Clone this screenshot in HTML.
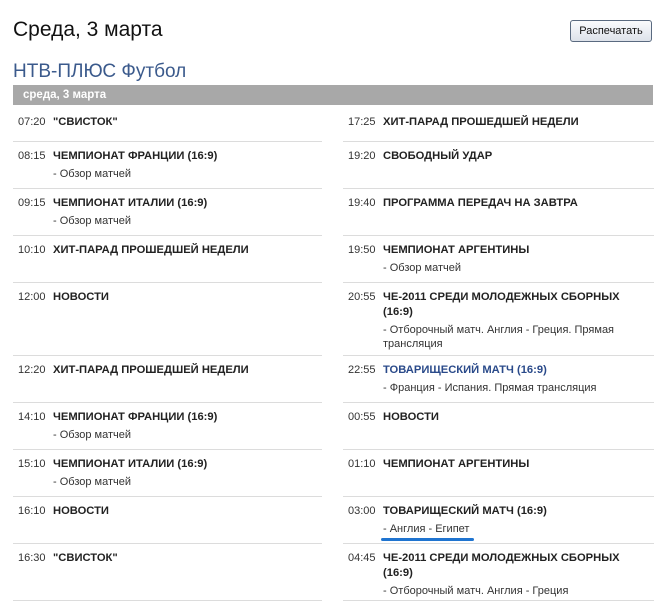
<!DOCTYPE html>
<html><head><meta charset="utf-8"><style>
body{margin:0;width:664px;height:608px;background:#fff;font-family:"Liberation Sans",Tahoma,sans-serif;position:relative;overflow:hidden;color:#333}
.h1{position:absolute;left:13px;top:18px;font-size:21px;color:#111}
.h2{position:absolute;left:13px;top:61px;font-size:19px;color:#3b5a8c}
.btn{position:absolute;left:570px;top:20px;width:80px;height:20px;border:1px solid #5a6a80;border-radius:3px;background:linear-gradient(#fafbfd,#dde2ea);font-size:11px;color:#111;text-align:center;line-height:20px}
.bar{position:absolute;left:13px;top:85px;width:640px;height:20px;background:#a8a8a8;color:#fff;font-weight:bold;font-size:11.5px;line-height:21px}
.bar span{padding-left:10px}
.r{position:absolute;font-size:11px;line-height:15px}
.t{position:absolute;color:#333}
.n{position:absolute;font-weight:bold;color:#222;width:262px;font-size:11.2px}
.d{font-weight:normal;color:#333;margin-top:3px;font-size:11px}
.ln{position:absolute;height:1px;background:#dcdcdc}
a{color:#2a4a8a}
</style></head><body>
<div class="h1">Среда, 3 марта</div>
<div class="btn">Распечатать</div>
<div class="h2">НТВ-ПЛЮС Футбол</div>
<div class="bar"><span>среда, 3 марта</span></div>

<div class="r" style="left:18px;top:115px"><span class="t">07:20</span><div class="n" style="left:35px">"СВИСТОК"</div></div>
<div class="r" style="left:18px;top:149px"><span class="t">08:15</span><div class="n" style="left:35px">ЧЕМПИОНАТ ФРАНЦИИ (16:9)<div class="d">- Обзор матчей</div></div></div>
<div class="r" style="left:18px;top:196px"><span class="t">09:15</span><div class="n" style="left:35px">ЧЕМПИОНАТ ИТАЛИИ (16:9)<div class="d">- Обзор матчей</div></div></div>
<div class="r" style="left:18px;top:243px"><span class="t">10:10</span><div class="n" style="left:35px">ХИТ-ПАРАД ПРОШЕДШЕЙ НЕДЕЛИ</div></div>
<div class="r" style="left:18px;top:290px"><span class="t">12:00</span><div class="n" style="left:35px">НОВОСТИ</div></div>
<div class="r" style="left:18px;top:363px"><span class="t">12:20</span><div class="n" style="left:35px">ХИТ-ПАРАД ПРОШЕДШЕЙ НЕДЕЛИ</div></div>
<div class="r" style="left:18px;top:410px"><span class="t">14:10</span><div class="n" style="left:35px">ЧЕМПИОНАТ ФРАНЦИИ (16:9)<div class="d">- Обзор матчей</div></div></div>
<div class="r" style="left:18px;top:457px"><span class="t">15:10</span><div class="n" style="left:35px">ЧЕМПИОНАТ ИТАЛИИ (16:9)<div class="d">- Обзор матчей</div></div></div>
<div class="r" style="left:18px;top:504px"><span class="t">16:10</span><div class="n" style="left:35px">НОВОСТИ</div></div>
<div class="r" style="left:18px;top:551px"><span class="t">16:30</span><div class="n" style="left:35px">"СВИСТОК"</div></div>

<div class="r" style="left:348px;top:115px"><span class="t">17:25</span><div class="n" style="left:35px">ХИТ-ПАРАД ПРОШЕДШЕЙ НЕДЕЛИ</div></div>
<div class="r" style="left:348px;top:149px"><span class="t">19:20</span><div class="n" style="left:35px">СВОБОДНЫЙ УДАР</div></div>
<div class="r" style="left:348px;top:196px"><span class="t">19:40</span><div class="n" style="left:35px">ПРОГРАММА ПЕРЕДАЧ НА ЗАВТРА</div></div>
<div class="r" style="left:348px;top:243px"><span class="t">19:50</span><div class="n" style="left:35px">ЧЕМПИОНАТ АРГЕНТИНЫ<div class="d">- Обзор матчей</div></div></div>
<div class="r" style="left:348px;top:290px"><span class="t">20:55</span><div class="n" style="left:35px">ЧЕ-2011 СРЕДИ МОЛОДЕЖНЫХ СБОРНЫХ (16:9)<div class="d" style="line-height:14px">- Отборочный матч. Англия - Греция. Прямая трансляция</div></div></div>
<div class="r" style="left:348px;top:363px"><span class="t">22:55</span><div class="n" style="left:35px"><a>ТОВАРИЩЕСКИЙ МАТЧ (16:9)</a><div class="d">- Франция - Испания. Прямая трансляция</div></div></div>
<div class="r" style="left:348px;top:410px"><span class="t">00:55</span><div class="n" style="left:35px">НОВОСТИ</div></div>
<div class="r" style="left:348px;top:457px"><span class="t">01:10</span><div class="n" style="left:35px">ЧЕМПИОНАТ АРГЕНТИНЫ</div></div>
<div class="r" style="left:348px;top:504px"><span class="t">03:00</span><div class="n" style="left:35px">ТОВАРИЩЕСКИЙ МАТЧ (16:9)<div class="d">- Англия - Египет</div></div></div>
<div class="r" style="left:348px;top:551px"><span class="t">04:45</span><div class="n" style="left:35px">ЧЕ-2011 СРЕДИ МОЛОДЕЖНЫХ СБОРНЫХ (16:9)<div class="d">- Отборочный матч. Англия - Греция</div></div></div>

<div style="position:absolute;left:381px;top:538px;width:93px;height:3px;border-radius:2px;background:#1f74d0"></div>

<div class="ln" style="left:13px;width:309px;top:141px"></div><div class="ln" style="left:343px;width:311px;top:141px"></div>
<div class="ln" style="left:13px;width:309px;top:188px"></div><div class="ln" style="left:343px;width:311px;top:188px"></div>
<div class="ln" style="left:13px;width:309px;top:235px"></div><div class="ln" style="left:343px;width:311px;top:235px"></div>
<div class="ln" style="left:13px;width:309px;top:282px"></div><div class="ln" style="left:343px;width:311px;top:282px"></div>
<div class="ln" style="left:13px;width:309px;top:355px"></div><div class="ln" style="left:343px;width:311px;top:355px"></div>
<div class="ln" style="left:13px;width:309px;top:402px"></div><div class="ln" style="left:343px;width:311px;top:402px"></div>
<div class="ln" style="left:13px;width:309px;top:449px"></div><div class="ln" style="left:343px;width:311px;top:449px"></div>
<div class="ln" style="left:13px;width:309px;top:496px"></div><div class="ln" style="left:343px;width:311px;top:496px"></div>
<div class="ln" style="left:13px;width:309px;top:543px"></div><div class="ln" style="left:343px;width:311px;top:543px"></div>
<div class="ln" style="left:13px;width:309px;top:600px"></div><div class="ln" style="left:343px;width:311px;top:600px"></div>
</body></html>
